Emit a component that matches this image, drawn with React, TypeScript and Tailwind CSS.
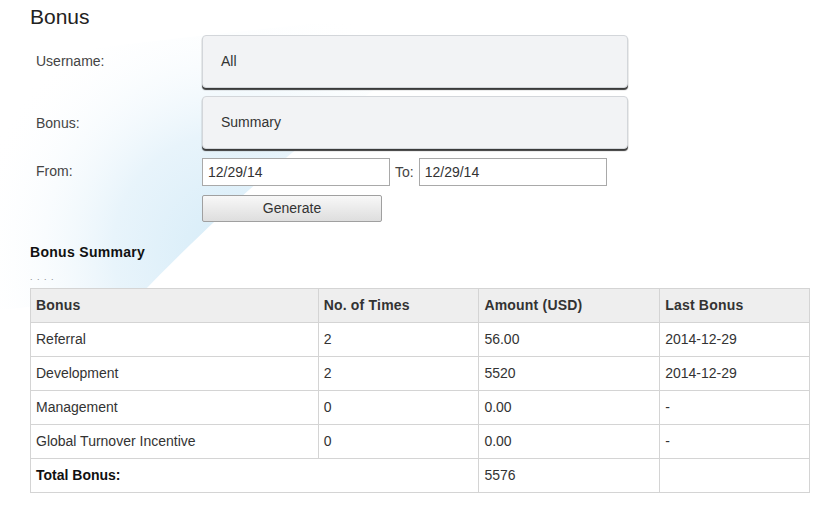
import React from "react";

const rows = [
  { name: "Referral", times: "2", amount: "56.00", last: "2014-12-29" },
  { name: "Development", times: "2", amount: "5520", last: "2014-12-29" },
  { name: "Management", times: "0", amount: "0.00", last: "-" },
  { name: "Global Turnover Incentive", times: "0", amount: "0.00", last: "-" },
];

// faint blue background swoosh behind the form
function Swoosh() {
  return (
    <svg
      className="absolute left-0 top-0 pointer-events-none"
      width="560"
      height="320"
      viewBox="0 0 560 320"
    >
      <defs>
        <radialGradient id="sw" cx="230" cy="250" r="260" gradientUnits="userSpaceOnUse">
          <stop offset="0" stopColor="#d6ecf8" />
          <stop offset="0.45" stopColor="#e8f4fb" />
          <stop offset="1" stopColor="#ffffff" stopOpacity="0" />
        </radialGradient>
      </defs>
      <path
        d="M0 60 C 150 40, 350 20, 530 0 C 420 50, 300 130, 140 295 L 0 310 Z"
        fill="url(#sw)"
      />
    </svg>
  );
}

function SelectBox({ value }: { value: string }) {
  return (
    <div className="w-[426px] h-[53px] flex items-center pl-[18px] bg-[#f2f3f5] border border-[#d3d6da] rounded-[4px] shadow-[0_2px_1px_#3a3a3a] text-[14px] text-[#333]">
      {value}
    </div>
  );
}

export default function App() {
  return (
    <div className="relative w-[816px] h-[511px] bg-white overflow-hidden font-['Liberation_Sans',Arial,sans-serif] text-[#333]">
      <Swoosh />
      <div className="relative">
        <h1 className="pl-[30px] pt-[5px] text-[21px] leading-[24px] text-[#222]">Bonus</h1>

        <div className="mt-[6px] flex items-start">
          <div className="w-[202px] pl-[36px] pt-[16px] text-[14px] text-[#444]">Username:</div>
          <SelectBox value="All" />
        </div>
        <div className="mt-[8px] flex items-start">
          <div className="w-[202px] pl-[36px] pt-[17px] text-[14px] text-[#444]">Bonus:</div>
          <SelectBox value="Summary" />
        </div>

        <div className="mt-[9px] flex items-center">
          <div className="w-[202px] pl-[36px] text-[14px] text-[#444] -mt-[2px]">From:</div>
          <div className="w-[188px] h-[28px] border border-[#a9a9a9] bg-white flex items-center pl-[5px] text-[14px]">
            12/29/14
          </div>
          <span className="ml-[5px] mr-[5px] text-[14px] text-[#444]">To:</span>
          <div className="w-[188px] h-[28px] border border-[#a9a9a9] bg-white flex items-center pl-[5px] text-[14px]">
            12/29/14
          </div>
        </div>

        <div className="mt-[9px] pl-[202px]">
          <button className="w-[180px] h-[27px] border border-[#a0a0a0] rounded-[2px] bg-gradient-to-b from-[#f8f8f8] to-[#dedede] text-[14px] text-[#333]">
            Generate
          </button>
        </div>

        <h2 className="mt-[22px] pl-[30px] text-[14px] font-bold text-[#111] leading-[17px] tracking-[0.3px]">
          Bonus Summary
        </h2>
        <div className="pl-[30px] mt-[11px] text-[9px] leading-[10px] text-[#888] tracking-[1px]">. . . .</div>

        <div className="pl-[30px] mt-[6px]">
          <table className="w-[780px] border-collapse text-[14px] text-[#333]">
            <colgroup>
              <col className="w-[288px]" />
              <col className="w-[161px]" />
              <col className="w-[181px]" />
              <col className="w-[150px]" />
            </colgroup>
            <thead>
              <tr className="h-[34px] bg-[#eeeeee]">
                <th className="border border-[#d4d4d4] text-left font-bold pl-[5px] tracking-[0.2px]">Bonus</th>
                <th className="border border-[#d4d4d4] text-left font-bold pl-[5px] tracking-[0.2px]">No. of Times</th>
                <th className="border border-[#d4d4d4] text-left font-bold pl-[5px] tracking-[0.2px]">Amount (USD)</th>
                <th className="border border-[#d4d4d4] text-left font-bold pl-[5px] tracking-[0.2px]">Last Bonus</th>
              </tr>
            </thead>
            <tbody className="bg-white">
              {rows.map((r) => (
                <tr key={r.name} className="h-[34px]">
                  <td className="border border-[#d4d4d4] pl-[5px]">{r.name}</td>
                  <td className="border border-[#d4d4d4] pl-[5px]">{r.times}</td>
                  <td className="border border-[#d4d4d4] pl-[5px]">{r.amount}</td>
                  <td className="border border-[#d4d4d4] pl-[5px]">{r.last}</td>
                </tr>
              ))}
              <tr className="h-[34px]">
                <td colSpan={2} className="border border-[#d4d4d4] pl-[5px] font-bold text-[#111]">
                  Total Bonus:
                </td>
                <td className="border border-[#d4d4d4] pl-[5px]">5576</td>
                <td className="border border-[#d4d4d4] pl-[5px]"></td>
              </tr>
            </tbody>
          </table>
        </div>
      </div>
    </div>
  );
}
